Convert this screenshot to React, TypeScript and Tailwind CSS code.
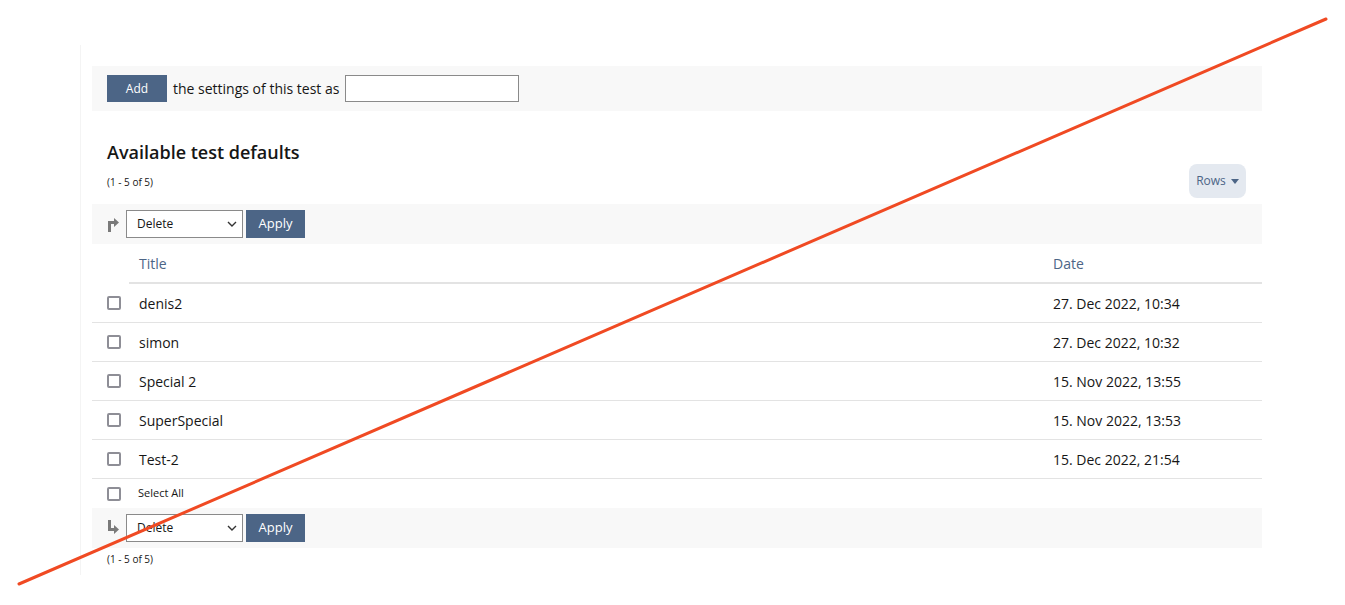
import { useState } from "react";

type Row = {
  id: number;
  title: string;
  date: string;
};

const rows: Row[] = [
  { id: 1, title: "denis2", date: "27. Dec 2022, 10:34" },
  { id: 2, title: "simon", date: "27. Dec 2022, 10:32" },
  { id: 3, title: "Special 2", date: "15. Nov 2022, 13:55" },
  { id: 4, title: "SuperSpecial", date: "15. Nov 2022, 13:53" },
  { id: 5, title: "Test-2", date: "15. Dec 2022, 21:54" },
];

function Check() {
  return <span className="block w-[14px] h-[14px] border-2 border-[#8e8e96] rounded-[2px] bg-white" />;
}

function ArrowUp() {
  return (
    <svg width="14" height="16" viewBox="0 0 14 16">
      <path d="M2 16V5h6V2l5 4.5-5 4.5V8H5v8z" fill="#7a7a7a" />
    </svg>
  );
}

function ArrowDown() {
  return (
    <svg width="14" height="16" viewBox="0 0 14 16">
      <path d="M2 0v11h6v3l5-4.5L8 5v3H5V0z" fill="#7a7a7a" />
    </svg>
  );
}

function ActionBar({ down }: { down?: boolean }) {
  return (
    <div className="flex items-center h-[40px] bg-[#f8f8f8] pl-[14px]">
      <span className="w-[20px] flex">{down ? <ArrowDown /> : <ArrowUp />}</span>
      <div className="relative w-[117px] h-[28px] border border-[#8a8a8a] bg-white flex items-center pl-[10px] text-[12px] text-[#161616]">
        Delete
        <svg className="absolute right-[5px] top-[10px]" width="10" height="7" viewBox="0 0 10 7">
          <path d="M1 1l4 4 4-4" stroke="#333" strokeWidth="1.4" fill="none" />
        </svg>
      </div>
      <button className="ml-[3px] w-[59px] h-[28px] bg-[#4c6586] text-white text-[13px]">Apply</button>
    </div>
  );
}

export default function App() {
  const [name, setName] = useState("");

  return (
    <div className="relative w-[1345px] h-[605px] bg-white overflow-hidden" style={{ fontFamily: '"Open Sans", sans-serif' }}>
      <div className="ml-[80px] mt-[45px] border-l border-[#f4f4f4] pl-[11px] w-[1182px] h-[530px]">
        <div className="pt-[21px]">
          {/* ADD BAR */}
          <div className="h-[45px] bg-[#f8f8f8] flex items-center pl-[15px]">
            <button className="w-[60px] h-[27px] bg-[#4c6586] text-white text-[12px]">Add</button>
            <span className="ml-[6px] text-[14px] text-[#161616]">the settings of this test as</span>
            <input
              value={name}
              onChange={(e) => setName(e.target.value)}
              className="ml-[6px] w-[174px] h-[27px] border border-[#8a8a8a] bg-white"
            />
          </div>

          {/* HEADING */}
          <div className="px-[15px] mt-[29px] flex items-end justify-between">
            <div className="pb-[10px]">
              <h2 className="text-[18px] font-semibold text-[#161616] leading-[24px]">Available test defaults</h2>
              <div className="mt-[12px] text-[10px] text-[#161616] leading-[12px]">(1 - 5 of 5)</div>
            </div>
            <button className="mr-[1px] w-[57px] h-[34px] rounded-[8px] bg-[#e4e9f0] text-[#4c6586] text-[12px] flex items-center justify-center gap-[5px]">
              Rows
              <svg width="8" height="5" viewBox="0 0 8 5">
                <path d="M0 0h8L4 5z" fill="#4c6586" />
              </svg>
            </button>
          </div>

          <div className="mt-[6px]">
            <ActionBar />
          </div>

          {/* TABLE */}
          <div className="flex h-[40px] items-center border-b-2 border-[#e3e3e3] ml-[37px] text-[14px] text-[#4c6586]">
            <span className="ml-[10px]">Title</span>
            <span className="ml-auto w-[209px]">Date</span>
          </div>
          {rows.map((r) => (
            <div key={r.id} className="flex items-center h-[39px] border-b border-[#e3e3e3] text-[14px] text-[#161616]">
              <span className="ml-[15px] w-[32px]">
                <Check />
              </span>
              <span>{r.title}</span>
              <span className="ml-auto w-[209px]">{r.date}</span>
            </div>
          ))}
          <div className="flex items-center h-[29px] text-[11px] text-[#161616]">
            <span className="ml-[15px] w-[31px]">
              <Check />
            </span>
            Select All
          </div>
          <ActionBar down />
          <div className="px-[15px] mt-[5px] text-[10px] text-[#161616] leading-[12px]">(1 - 5 of 5)</div>
        </div>
      </div>

      <svg className="absolute inset-0 pointer-events-none" width="1345" height="605">
        <line x1="19" y1="584" x2="1326" y2="19" stroke="#f04a23" strokeWidth="3" strokeLinecap="round" />
      </svg>
    </div>
  );
}
